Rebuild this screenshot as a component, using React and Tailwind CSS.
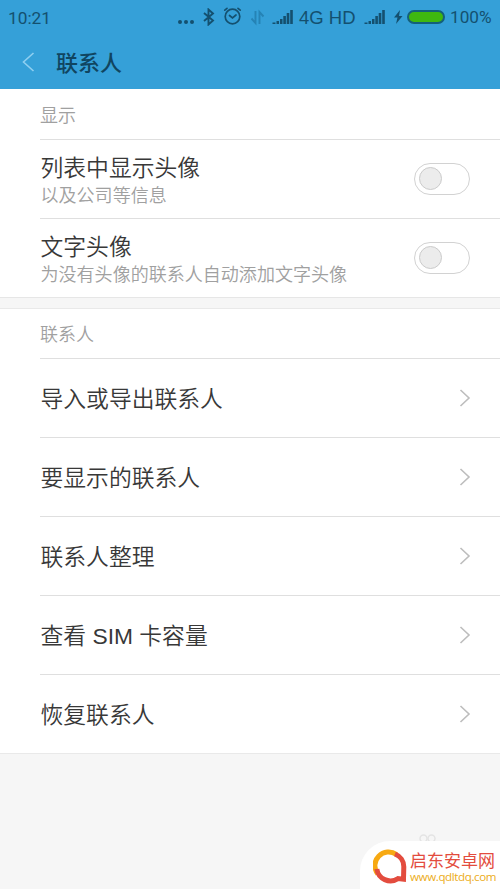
import React from "react";

function Signal() {
  return (
    <svg width="22" height="16" viewBox="0 0 22 16" className="block" fill="#14506f">
      <rect x="0.5" y="13.5" width="3" height="1.5" />
      <rect x="4.5" y="12" width="2.5" height="3" />
      <rect x="8" y="10" width="2.5" height="5" />
      <rect x="11.3" y="7" width="2.6" height="8" />
      <rect x="14.7" y="4" width="2.6" height="11" />
      <rect x="18.2" y="1" width="2.6" height="14" />
    </svg>
  );
}

function StatusBar() {
  return (
    <div className="flex h-9 items-center pl-2 text-[#14506f] font-[Roboto,sans-serif] font-normal whitespace-nowrap leading-5">
      <span className="w-[169px] text-[17.3px] shrink-0">10:21</span>
      <svg className="shrink-0" width="18" height="16" viewBox="0 0 18 16" fill="#14506f">
        <circle cx="3" cy="12" r="2" />
        <circle cx="9" cy="12" r="2" />
        <circle cx="15" cy="12" r="2" />
      </svg>
      <svg className="ml-2 mb-0.5 shrink-0" width="12" height="18" viewBox="0 0 12 18" fill="none" stroke="#14506f" strokeWidth="1.9">
        <path d="M1 5l9 7.5-4.5 4V1.5l4.5 4L1 13" />
      </svg>
      <svg className="ml-2 mb-1 shrink-0" width="20" height="20" viewBox="0 0 20 20" fill="none" stroke="#14506f" strokeWidth="1.7" strokeLinecap="round">
        <circle cx="9.5" cy="10.5" r="7.3" />
        <path d="M1.8 4.2L4 2.4M15 2.4l2.2 1.8M6.5 9.5l3 2.5 3.5-3" />
      </svg>
      <svg className="ml-[7px] mb-0.5 shrink-0" width="15" height="18" viewBox="0 0 15 18" fill="none" stroke="#2583b5" strokeWidth="1.9">
        <path d="M5.5 3v12L1.5 10.5M9.5 16V4l4 4.5" />
      </svg>
      <span className="ml-[7px] mb-0.5 w-[23px] shrink-0"><Signal /></span>
      <span className="ml-1 w-[65px] shrink-0 text-[18.5px] font-[Liberation_Sans,Arial,sans-serif]">4G HD</span>
      <span className="mb-0.5 w-[23px] shrink-0"><Signal /></span>
      <svg className="ml-[6px] mb-0.5 shrink-0" width="11" height="14" viewBox="0 0 11 14" fill="#14506f">
        <path d="M7 0L1 7.5h3.5L3 14l6.5-8H6z" />
      </svg>
      <span className="ml-[3px] mb-0.5 h-[14px] w-[38px] shrink-0 rounded-full border-2 border-[#14607a] bg-[#3fb80f]" />
      <span className="ml-[5px] mb-0.5 text-[17.2px]">100%</span>
    </div>
  );
}

function Toggle() {
  return (
    <span className="flex h-8 w-14 shrink-0 items-center rounded-full border border-[#d2d2d2] pl-[4px]">
      <span className="mb-px size-[23px] rounded-full border border-[#cbcbcb] bg-[#ececec]" />
    </span>
  );
}

function ToggleRow({ title, note, last }) {
  return (
    <div className={last ? "flex h-[78px] items-center pr-[30px]" : "flex h-[79px] items-center border-b border-[#dfdfdf] pr-[30px]"}>
      <div className="flex-1 pl-[0.5px]">
        <div className="text-[22.8px] leading-[31px] text-[#383838]">{title}</div>
        <div className="text-[18.05px] leading-[25px] text-[#a0a0a0]">{note}</div>
      </div>
      <Toggle />
    </div>
  );
}

function LinkRow({ title, last }) {
  return (
    <div className={last ? "flex h-[78px] items-center pr-[29px]" : "flex h-[79px] items-center border-b border-[#dfdfdf] pr-[29px]"}>
      <span className="flex-1 pl-[0.5px] text-[22.8px] leading-8 text-[#383838]">{title}</span>
      <svg className="mb-px" width="12" height="18" viewBox="0 0 12 18" fill="none" stroke="#bdbdbd" strokeWidth="1.6">
        <path d="M1.5 1L10 9l-8.5 8" />
      </svg>
    </div>
  );
}

function Watermark() {
  return (
    <div className="absolute right-0 bottom-0 h-[56px] w-[140px]">
      <svg className="absolute top-0 left-[58px]" width="20" height="14" viewBox="0 0 20 14" fill="none" stroke="#e4e4e4" strokeWidth="1.5">
        <circle cx="5.5" cy="5.5" r="3.5" />
        <circle cx="13.5" cy="5.5" r="3.5" />
      </svg>
      <div className="absolute bottom-0 flex h-12 w-[140px] items-center rounded-tl-[30px] bg-white pl-[12px]">
        <svg className="mt-[3px] ml-px shrink-0" width="36" height="36" viewBox="0 0 36 36" fill="none" strokeWidth="5">
          <path d="M4.8 25A13.6 13.6 0 0 1 23.5 5.6" stroke="#f7a912" />
          <path d="M22 5A13.6 13.6 0 0 1 30.8 18L30.5 30.2L25 29.6A13.8 13.8 0 0 1 3.8 20" stroke="#e34c3e" />
        </svg>
        <div className="ml-px pt-1 whitespace-nowrap font-normal">
          <div className="text-[17px] leading-[20px] text-[#e34c3e]">启东安卓网</div>
          <div className="text-[11.6px] leading-[14px] tracking-[-0.4px] text-[#ecac20] font-[Open_Sans,sans-serif]">www.qdltdq.com</div>
        </div>
      </div>
    </div>
  );
}

export default function App() {
  return (
    <div className="relative h-[889px] w-[500px] overflow-hidden bg-[#f6f6f6] font-[Noto_Sans_CJK_SC,sans-serif] font-[350]">
      <header className="h-[89px] bg-[#35a0d8]">
        <StatusBar />
        <div className="flex h-[51px] items-center pl-[22px]">
          <svg width="13" height="20" viewBox="0 0 13 20" fill="none" stroke="#8fcff0" strokeWidth="1.6">
            <path d="M11.5 1L1.5 10l10 9" />
          </svg>
          <h1 className="ml-[21px] text-[22px] leading-[31px] font-medium text-[#104560]">联系人</h1>
        </div>
      </header>
      <section className="border-b border-[#e6e6e6] bg-white pl-10">
        <div className="flex h-[51px] items-center border-b border-[#dfdfdf] text-[18px] text-[#a0a0a0]">显示</div>
        <ToggleRow title="列表中显示头像" note="以及公司等信息" />
        <ToggleRow title="文字头像" note="为没有头像的联系人自动添加文字头像" last />
      </section>
      <section className="mt-[10px] border-y border-[#e9e9e9] bg-white pl-10">
        <div className="flex h-[50px] items-center border-b border-[#dfdfdf] text-[18px] text-[#a0a0a0]">联系人</div>
        <LinkRow title="导入或导出联系人" />
        <LinkRow title="要显示的联系人" />
        <LinkRow title="联系人整理" />
        <LinkRow
          title={
            <>
              查看<span className="font-[Liberation_Sans,Arial,sans-serif]"> SIM </span>卡容量
            </>
          }
        />
        <LinkRow title="恢复联系人" last />
      </section>
      <Watermark />
    </div>
  );
}
